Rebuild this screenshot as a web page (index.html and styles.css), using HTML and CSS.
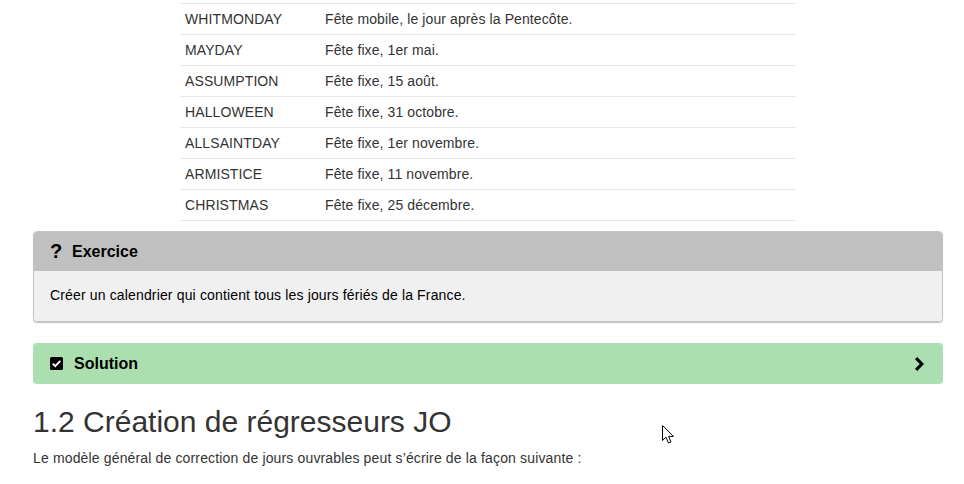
FILE: index.html
```html
<!DOCTYPE html>
<html lang="fr">
<head>
<meta charset="utf-8">
<link rel="stylesheet" href="styles.css">
</head>
<body>
<div class="page">
  <table class="holidays">
    <tr><td class="code">WHITMONDAY</td><td>Fête mobile, le jour après la Pentecôte.</td></tr>
    <tr><td class="code">MAYDAY</td><td>Fête fixe, 1er mai.</td></tr>
    <tr><td class="code">ASSUMPTION</td><td>Fête fixe, 15 août.</td></tr>
    <tr><td class="code">HALLOWEEN</td><td>Fête fixe, 31 octobre.</td></tr>
    <tr><td class="code">ALLSAINTDAY</td><td>Fête fixe, 1er novembre.</td></tr>
    <tr><td class="code">ARMISTICE</td><td>Fête fixe, 11 novembre.</td></tr>
    <tr><td class="code">CHRISTMAS</td><td>Fête fixe, 25 décembre.</td></tr>
  </table>

  <div class="exercise">
    <div class="exercise-head">
      <span class="qmark">?</span>
      <span class="title">Exercice</span>
    </div>
    <div class="exercise-body">Créer un calendrier qui contient tous les jours fériés de la France.</div>
  </div>

  <div class="solution">
    <svg class="check" width="13" height="13" viewBox="0 0 13 13"><rect x="0" y="0" width="13" height="13" rx="1.5" fill="#000"/><path d="M2.8 6.6 L5.3 9.1 L10.3 3.9" stroke="#fff" stroke-width="2" fill="none"/></svg>
    <span class="title">Solution</span>
    <svg class="chev" width="12" height="14" viewBox="0 0 12 14"><path d="M2 2.2 L4.2 0 L11 7 L4.2 14 L2 11.8 L6.8 7 Z" fill="#000"/></svg>
  </div>

  <h2 class="section">1.2 Création de régresseurs JO</h2>
  <p class="lead">Le modèle général de correction de jours ouvrables peut s’écrire de la façon suivante :</p>

  <svg class="cursor" width="14" height="20" viewBox="0 0 14 20"><path d="M0.5 0.5 L0.5 15.5 L4 12.2 L6.5 18 L9 17 L6.6 11.4 L11.5 11.4 Z" fill="#fff" stroke="#000" stroke-width="1"/></svg>
</div>
</body>
</html>
```

FILE: styles.css
```css
html, body {
  margin: 0;
  padding: 0;
  background: #fff;
}
body {
  font-family: "Liberation Sans", Arial, sans-serif;
  font-size: 14px;
  color: #333;
}
.page {
  position: relative;
  width: 910px;
  margin-left: 33px;
  padding-top: 3px;
}
.holidays {
  margin-left: 147px;
  width: 616px;
  border-collapse: collapse;
  border-bottom: 1px solid #e6e6e6;
}
.holidays td {
  border-top: 1px solid #e6e6e6;
  padding: 5px 5px;
  line-height: 20px;
  vertical-align: top;
  letter-spacing: 0.1px;
}
.holidays td.code {
  width: 130px;
}
.exercise {
  margin-top: 10px;
  border: 1px solid #c4c4c4;
  border-radius: 4px;
  box-shadow: 0 1px 1px rgba(0,0,0,0.25);
  overflow: hidden;
}
.exercise-head {
  background: #c0c0c0;
  height: 39px;
  display: flex;
  align-items: center;
  padding-left: 16px;
  color: #000;
}
.qmark {
  font-weight: bold;
  font-size: 20px;
  width: 22px;
}
.title {
  font-weight: bold;
  font-size: 16px;
  color: #000;
}
.exercise-body {
  background: #f0f0f0;
  color: #000;
  padding: 15px 16px 16px;
  line-height: 19px;
  letter-spacing: 0.15px;
}
.solution {
  margin-top: 21px;
  background: #acdfb0;
  border-radius: 4px;
  height: 41px;
  display: flex;
  align-items: center;
  padding: 0 18px 0 17px;
}
.solution .check {
  margin-right: 11px;
}
.solution .title {
  flex: 1;
}
.section {
  font-weight: normal;
  font-size: 30px;
  line-height: 33px;
  margin: 21px 0 10px;
  color: #333;
}
.lead {
  margin: 0;
  line-height: 20px;
  color: #333;
  letter-spacing: 0.15px;
}
.cursor {
  position: absolute;
  left: 629px;
  top: 425px;
}
```
